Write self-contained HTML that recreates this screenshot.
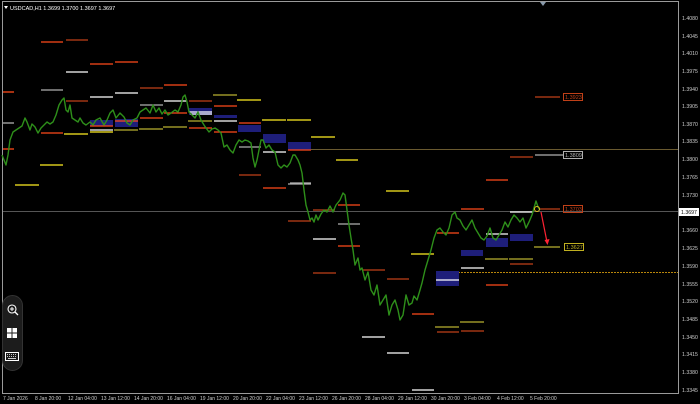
<!DOCTYPE html>
<html><head><meta charset="utf-8"><style>
html,body{margin:0;padding:0;background:#000;width:700px;height:404px;overflow:hidden}
svg{display:block}
text{font-family:"Liberation Sans",sans-serif}
</style></head><body>
<svg width="700" height="404" viewBox="0 0 700 404" xmlns="http://www.w3.org/2000/svg">
<rect width="700" height="404" fill="#000"/>
<line x1="2.5" y1="1" x2="2.5" y2="393" stroke="#9a9a9a"/>
<line x1="2" y1="1.5" x2="678" y2="1.5" stroke="#9a9a9a"/>
<line x1="2" y1="393.5" x2="679" y2="393.5" stroke="#9a9a9a"/>
<path d="M540 2 L546 2 L543 6 Z" fill="#8899aa"/>
<text x="10" y="10" font-size="5.5" fill="#fff">USDCAD,H1  1.3699 1.3700 1.3697 1.3697</text>
<path d="M4 6 L8 6 L6 9 Z" fill="#fff"/>
<line x1="311" y1="149.5" x2="678" y2="149.5" stroke="#6a5a30"/>
<line x1="3" y1="211.5" x2="678" y2="211.5" stroke="#555"/>
<line x1="458" y1="272.5" x2="678" y2="272.5" stroke="#b8860b" stroke-dasharray="2,1"/>
<g fill="#1e1e7a">
<rect x="90" y="120" width="23" height="6"/><rect x="115" y="119" width="23" height="8"/>
<rect x="189" y="108" width="23" height="7"/><rect x="214" y="115" width="23" height="3"/>
<rect x="238" y="125" width="23" height="7"/><rect x="263" y="134" width="23" height="9"/>
<rect x="288" y="142" width="23" height="8"/><rect x="436" y="271" width="23" height="15"/>
<rect x="461" y="250" width="22" height="6"/><rect x="486" y="238" width="22" height="9"/>
<rect x="510" y="234" width="23" height="7"/>
</g>
<g stroke-width="1.3">
<g stroke="#ff4a1a">
<line x1="3" x2="14" y1="92" y2="92"/><line x1="41" x2="63" y1="42" y2="42"/>
<line x1="90" x2="113" y1="64" y2="64"/><line x1="115" x2="138" y1="62" y2="62"/>
<line x1="164" x2="187" y1="85" y2="85"/><line x1="115" x2="138" y1="121" y2="121"/>
<line x1="41" x2="63" y1="133" y2="133"/><line x1="90" x2="113" y1="126" y2="126"/>
<line x1="140" x2="163" y1="118" y2="118"/><line x1="164" x2="187" y1="113" y2="113"/>
<line x1="189" x2="212" y1="128" y2="128"/><line x1="214" x2="237" y1="106" y2="106"/>
<line x1="214" x2="237" y1="132" y2="132"/><line x1="239" x2="261" y1="123" y2="123"/>
<line x1="263" x2="286" y1="188" y2="188"/><line x1="288" x2="311" y1="150" y2="150"/>
<line x1="338" x2="360" y1="246" y2="246"/><line x1="412" x2="434" y1="314" y2="314"/>
<line x1="437" x2="459" y1="233" y2="233"/><line x1="461" x2="484" y1="209" y2="209"/>
<line x1="486" x2="508" y1="285" y2="285"/><line x1="486" x2="508" y1="180" y2="180"/>
<line x1="3" x2="14" y1="149" y2="149"/><line x1="338" x2="360" y1="205" y2="205"/>
</g>
<g stroke="#c04018">
<line x1="66" x2="88" y1="40" y2="40"/>
<line x1="140" x2="163" y1="88" y2="88"/><line x1="66" x2="88" y1="101" y2="101"/>
<line x1="189" x2="212" y1="101" y2="101"/>
<line x1="239" x2="261" y1="175" y2="175"/><line x1="288" x2="311" y1="221" y2="221"/>
<line x1="313" x2="335" y1="210" y2="210"/><line x1="313" x2="336" y1="273" y2="273"/>
<line x1="363" x2="385" y1="270" y2="270"/><line x1="387" x2="409" y1="279" y2="279"/>
<line x1="437" x2="459" y1="332" y2="332"/><line x1="461" x2="484" y1="331" y2="331"/>
<line x1="510" x2="533" y1="264" y2="264"/><line x1="510" x2="533" y1="157" y2="157"/>
<line x1="535" x2="560" y1="97" y2="97"/><line x1="540" x2="560" y1="209" y2="209"/>
</g>
<g stroke="#ffffff">
<line x1="66" x2="88" y1="72" y2="72"/><line x1="90" x2="113" y1="97" y2="97"/>
<line x1="115" x2="138" y1="93" y2="93"/>
<line x1="90" x2="113" y1="130" y2="130"/><line x1="164" x2="187" y1="101" y2="101"/>
<line x1="189" x2="212" y1="112" y2="112"/><line x1="214" x2="237" y1="121" y2="121"/>
<line x1="263" x2="286" y1="152" y2="152"/><line x1="313" x2="336" y1="239" y2="239"/>
<line x1="362" x2="385" y1="337" y2="337"/><line x1="387" x2="409" y1="353" y2="353"/>
<line x1="412" x2="434" y1="390" y2="390"/><line x1="436" x2="459" y1="280" y2="280"/>
<line x1="461" x2="484" y1="268" y2="268"/><line x1="486" x2="508" y1="234" y2="234"/>
<line x1="510" x2="533" y1="212" y2="212"/><line x1="190" x2="212" y1="114" y2="114"/>
</g>
<g stroke="#b0b0b0">
<line x1="41" x2="63" y1="90" y2="90"/><line x1="3" x2="14" y1="123" y2="123"/>
<line x1="140" x2="163" y1="105" y2="105"/><line x1="239" x2="261" y1="147" y2="147"/>
<line x1="288" x2="311" y1="184" y2="184"/><line x1="338" x2="360" y1="224" y2="224"/>
<line x1="290" x2="311" y1="183" y2="183"/><line x1="535" x2="563" y1="155" y2="155"/>
</g>
<g stroke="#ffee22">
<line x1="15" x2="39" y1="185" y2="185"/><line x1="40" x2="63" y1="165" y2="165"/>
<line x1="64" x2="88" y1="134" y2="134"/><line x1="237" x2="261" y1="100" y2="100"/>
<line x1="262" x2="286" y1="120" y2="120"/><line x1="287" x2="311" y1="120" y2="120"/>
<line x1="311" x2="335" y1="137" y2="137"/><line x1="336" x2="358" y1="160" y2="160"/>
<line x1="386" x2="409" y1="191" y2="191"/><line x1="411" x2="434" y1="254" y2="254"/>
<line x1="90" x2="113" y1="132" y2="132"/>
</g>
<g stroke="#b8b030">
<line x1="114" x2="138" y1="130" y2="130"/><line x1="139" x2="163" y1="129" y2="129"/>
<line x1="163" x2="187" y1="127" y2="127"/><line x1="188" x2="212" y1="121" y2="121"/>
<line x1="213" x2="237" y1="95" y2="95"/><line x1="435" x2="459" y1="327" y2="327"/>
<line x1="460" x2="484" y1="322" y2="322"/><line x1="485" x2="508" y1="259" y2="259"/>
<line x1="509" x2="533" y1="259" y2="259"/><line x1="534" x2="560" y1="247" y2="247"/>
</g>
</g>
<polyline fill="none" stroke="#2e8f1a" stroke-width="1.4" stroke-linejoin="round" points="2,155 4,160 6,165 8,155 10,140 13,132 16,130 19,128 22,126 25,118 27,122 30,130 32,124 35,127 38,133 41,128 44,125 47,122 50,124 53,122 56,115 59,105 62,100 64,98 66,110 68,112 70,105 72,118 75,120 78,122 80,118 83,123 86,125 90,122 93,125 96,120 100,118 104,125 107,120 110,113 113,110 116,118 120,113 124,117 127,123 130,125 133,120 137,118 140,112 143,110 146,108 150,113 153,105 156,112 159,108 162,114 165,110 168,115 171,113 175,110 178,112 181,105 183,97 185,95 187,102 189,112 192,115 195,118 198,112 201,120 204,125 206,128 209,132 212,129 215,128 218,130 221,133 224,147 227,145 230,150 233,153 236,145 239,140 242,142 245,140 248,141 251,143 253,158 255,167 257,160 259,150 261,140 263,140 266,148 269,145 272,150 275,152 278,165 281,168 284,165 287,167 290,163 293,155 295,155 298,160 300,165 302,173 304,190 306,205 308,212 310,220 312,218 314,222 316,215 318,220 321,214 324,210 327,212 330,206 333,212 336,205 340,200 343,193 345,195 347,210 349,225 351,238 353,250 355,265 358,258 360,270 362,268 365,280 368,272 371,290 374,295 377,285 380,305 383,300 386,295 389,315 392,305 395,300 398,310 400,320 403,315 406,295 409,305 412,303 414,296 417,300 420,290 422,283 425,270 428,260 431,250 434,238 437,230 440,228 443,232 446,235 449,228 452,215 455,212 457,218 460,220 463,226 466,230 469,225 472,220 475,228 478,233 481,238 484,240 487,236 490,228 493,238 496,240 499,235 502,230 505,222 508,227 511,220 514,215 517,218 520,222 523,218 526,228 529,222 532,215 534,208 536,201 538,207 540,210"/>
<circle cx="537" cy="209" r="2.5" fill="none" stroke="#e0c020"/>
<line x1="541" y1="212" x2="547" y2="242" stroke="#ff2233" stroke-width="1.2"/>
<path d="M544.5 240 L549.5 239 L547.5 245 Z" fill="#ff2233"/>
<g font-size="5.5">
<rect x="563.5" y="93.5" width="19" height="7" fill="none" stroke="#c04018"/><text x="565" y="99" fill="#c04018">1.3923</text>
<rect x="563.5" y="151.5" width="19" height="7" fill="none" stroke="#b0b0b0"/><text x="565" y="157" fill="#b0b0b0">1.3809</text>
<rect x="563.5" y="205.5" width="19" height="7" fill="none" stroke="#c04018"/><text x="565" y="211" fill="#c04018">1.3703</text>
<rect x="564.5" y="243.5" width="19" height="7" fill="none" stroke="#c0b020"/><text x="566" y="249" fill="#c0b020">1.3627</text>
</g>
<line x1="678.5" y1="1" x2="678.5" y2="393" stroke="#9a9a9a"/>
<g font-size="5.2" fill="#ccc">
<text x="682" y="20">1.4080</text><text x="682" y="38">1.4045</text><text x="682" y="55">1.4010</text>
<text x="682" y="73">1.3975</text><text x="682" y="91">1.3940</text><text x="682" y="108">1.3905</text>
<text x="682" y="126">1.3870</text><text x="682" y="143">1.3835</text><text x="682" y="161">1.3800</text>
<text x="682" y="179">1.3765</text><text x="682" y="197">1.3730</text>
<text x="682" y="232">1.3660</text><text x="682" y="250">1.3625</text><text x="682" y="268">1.3590</text>
<text x="682" y="286">1.3555</text><text x="682" y="303">1.3520</text><text x="682" y="321">1.3485</text>
<text x="682" y="339">1.3450</text><text x="682" y="356">1.3415</text><text x="682" y="374">1.3380</text>
<text x="682" y="392">1.3345</text>
</g>
<rect x="679" y="208" width="20" height="8" fill="#fff"/>
<text x="681" y="214" font-size="5.2" fill="#000">1.3697</text>
<g font-size="5" fill="#ccc">
<text x="3" y="400">7 Jan 2026</text><text x="35" y="400">8 Jan 20:00</text><text x="68" y="400">12 Jan 04:00</text>
<text x="101" y="400">13 Jan 12:00</text><text x="134" y="400">14 Jan 20:00</text><text x="167" y="400">16 Jan 04:00</text>
<text x="200" y="400">19 Jan 12:00</text><text x="233" y="400">20 Jan 20:00</text><text x="266" y="400">22 Jan 04:00</text>
<text x="299" y="400">23 Jan 12:00</text><text x="332" y="400">26 Jan 20:00</text><text x="365" y="400">28 Jan 04:00</text>
<text x="398" y="400">29 Jan 12:00</text><text x="431" y="400">30 Jan 20:00</text><text x="464" y="400">3 Feb 04:00</text>
<text x="497" y="400">4 Feb 12:00</text><text x="530" y="400">5 Feb 20:00</text>
</g>
<rect x="2.5" y="295.5" width="20" height="75" rx="10" fill="#1c1c1c" stroke="#333"/>
<circle cx="12" cy="309" r="4" fill="none" stroke="#fff" stroke-width="1.1"/>
<line x1="15" y1="312" x2="18" y2="315" stroke="#fff" stroke-width="1.3"/>
<line x1="10" y1="309" x2="14" y2="309" stroke="#fff"/><line x1="12" y1="307" x2="12" y2="311" stroke="#fff"/>
<rect x="7" y="328" width="4.5" height="4.5" fill="#fff"/><rect x="12.5" y="328" width="4.5" height="4.5" fill="#fff"/>
<rect x="7" y="333.5" width="4.5" height="4.5" fill="#fff"/><rect x="12.5" y="333.5" width="4.5" height="4.5" fill="#fff"/>
<rect x="5.5" y="352.5" width="13" height="8" fill="none" stroke="#fff"/>
<g stroke="#fff" stroke-width="0.8"><line x1="7" x2="17" y1="354.5" y2="354.5" stroke-dasharray="1,1"/><line x1="7" x2="17" y1="356.5" y2="356.5" stroke-dasharray="1,1"/><line x1="8" x2="16" y1="358.5" y2="358.5"/></g>
</svg>
</body></html>
